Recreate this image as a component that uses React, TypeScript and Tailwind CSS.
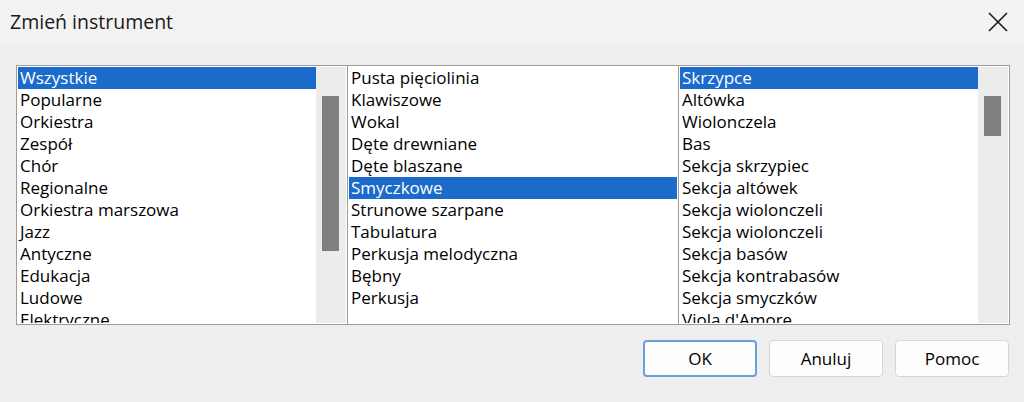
import React from "react";

const categories = [
	"Wszystkie",
	"Popularne",
	"Orkiestra",
	"Zespół",
	"Chór",
	"Regionalne",
	"Orkiestra marszowa",
	"Jazz",
	"Antyczne",
	"Edukacja",
	"Ludowe",
	"Elektryczne",
];

const families = [
	"Pusta pięciolinia",
	"Klawiszowe",
	"Wokal",
	"Dęte drewniane",
	"Dęte blaszane",
	"Smyczkowe",
	"Strunowe szarpane",
	"Tabulatura",
	"Perkusja melodyczna",
	"Bębny",
	"Perkusja",
];

const instruments = [
	"Skrzypce",
	"Altówka",
	"Wiolonczela",
	"Bas",
	"Sekcja skrzypiec",
	"Sekcja altówek",
	"Sekcja wiolonczeli",
	"Sekcja wiolonczeli",
	"Sekcja basów",
	"Sekcja kontrabasów",
	"Sekcja smyczków",
	"Viola d'Amore",
];

function ListBox({
	items,
	selected,
	thumb,
}: {
	items: string[];
	selected: number;
	thumb?: "long" | "short";
}) {
	return (
		<div className="flex h-[260px] w-[332px] border border-[#9c9c9c] bg-white p-px overflow-hidden">
			<div className="flex-1 overflow-hidden">
				{items.map((item, i) => (
					<div
						key={i}
						className={
							i === selected
								? "h-[22px] pl-[2px] leading-[22px] whitespace-nowrap bg-[#1b6bcb] text-white"
								: "h-[22px] pl-[2px] leading-[22px] whitespace-nowrap text-black"
						}
					>
						{item}
					</div>
				))}
			</div>
			{thumb && (
				<div className="w-[30px] shrink-0 bg-[#ececec] pt-[29px] pl-[6px]">
					<div
						className={
							thumb === "long"
								? "h-[155px] w-[17px] bg-[#7f7f7f]"
								: "h-[40px] w-[17px] bg-[#7f7f7f]"
						}
					/>
				</div>
			)}
		</div>
	);
}

export default function App() {
	return (
		<div
			className="w-[1024px] h-[402px] bg-[#eeeeee] text-[17px] overflow-hidden"
			style={{ fontFamily: "'Open Sans', 'Noto Sans', sans-serif" }}
		>
			{/* Title bar */}
			<div className="flex h-[44px] items-center justify-between bg-[#f3f3f3] pl-[10px] pr-[15px]">
				<span className="text-[19.5px] text-[#1a1a1a]">Zmień instrument</span>
				<svg width="20" height="20" viewBox="0 0 20 20" className="mr-[1px]">
					<path d="M1 1 L19 19 M19 1 L1 19" stroke="#1a1a1a" strokeWidth="1.6" />
				</svg>
			</div>

			{/* Lists */}
			<div className="flex pl-[16px] pt-[21px]">
				<ListBox items={categories} selected={0} thumb="long" />
				<div className="-ml-px">
					<ListBox items={families} selected={5} />
				</div>
				<div className="-ml-px">
					<ListBox items={instruments} selected={0} thumb="short" />
				</div>
			</div>

			{/* Buttons */}
			<div className="flex justify-end gap-[12px] pr-[15px] pt-[15px]">
				<button className="h-[37px] w-[114px] rounded-[4px] border-2 border-[#6a9fde] bg-[#fdfdfd] text-[17px] text-black">
					OK
				</button>
				<button className="h-[37px] w-[114px] rounded-[4px] border border-[#d6d6d6] bg-[#fdfdfd] text-[17px] text-black">
					Anuluj
				</button>
				<button className="h-[37px] w-[114px] rounded-[4px] border border-[#d6d6d6] bg-[#fdfdfd] text-[17px] text-black">
					Pomoc
				</button>
			</div>
		</div>
	);
}
